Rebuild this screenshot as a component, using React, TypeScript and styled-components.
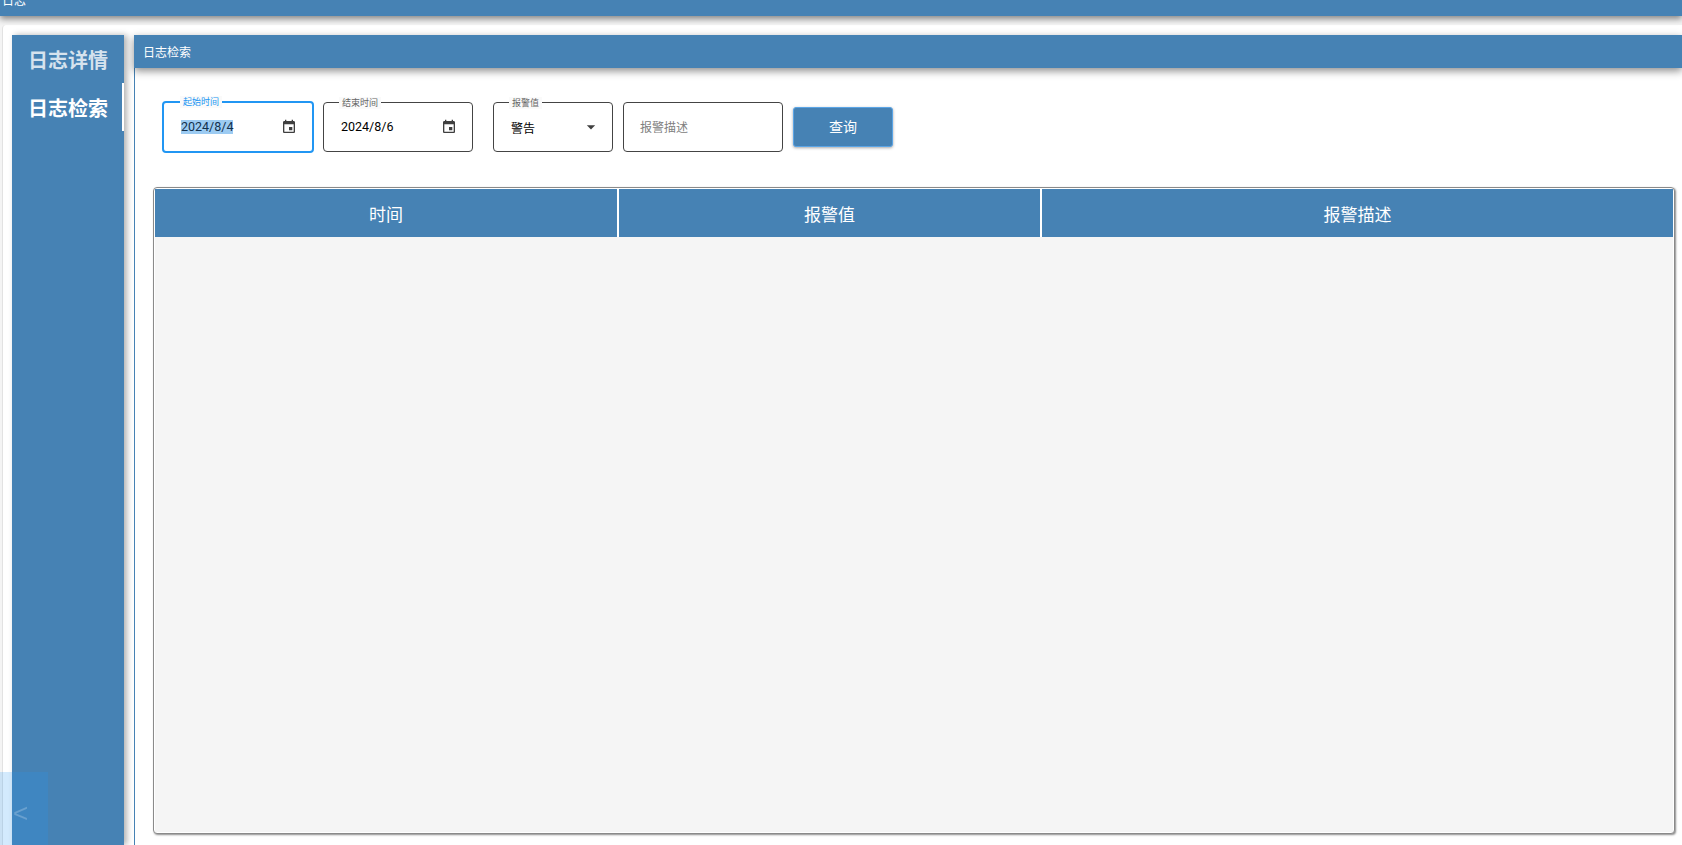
import React from "react";
import styled, { createGlobalStyle } from "styled-components";

const STEEL = "#4682b4";

const GlobalStyle = createGlobalStyle`
  * {
    box-sizing: border-box;
  }
  html,
  body {
    margin: 0;
    height: 845px;
    overflow: hidden;
    background: #fff;
    font-family: "Noto Sans CJK SC", Roboto, sans-serif;
  }
`;

const Page = styled.div`
  display: flex;
  flex-direction: column;
  height: 845px;
  overflow: hidden;
  background: #f4f4f4;
`;

const TopBar = styled.header`
  height: 16px;
  flex: none;
  background: ${STEEL};
  color: #fff;
  font-size: 12px;
  line-height: 16px;
  padding-left: 2px;
  overflow: hidden;
  box-shadow: 0 3px 6px rgba(0, 0, 0, 0.45);
  position: relative;
  z-index: 3;
`;

const TopTitle = styled.div`
  margin-top: -8px;
`;

const Card = styled.div`
  flex: 1;
  min-height: 0;
  display: flex;
  gap: 10px;
  margin: 9px 0 0 2px;
  padding: 10px 0 0 10px;
  background: #fff;
  border-left: 1px solid #e2e2e2;
  border-top-left-radius: 4px;
`;

const Sidebar = styled.nav`
  width: 112px;
  margin-left: -1px;
  flex: none;
  background: ${STEEL};
  box-shadow: 3px 0 6px rgba(0, 0, 0, 0.3);
`;

const NavItem = styled.div<{ $active?: boolean }>`
  height: 48px;
  display: flex;
  align-items: center;
  justify-content: center;
  padding-left: 2px;
  font-size: 20px;
  font-weight: 700;
  color: ${(p) => (p.$active ? "#fff" : "rgba(255, 255, 255, 0.78)")};
  border-right: 2px solid ${(p) => (p.$active ? "#fff" : "transparent")};
`;

const Main = styled.main`
  flex: 1;
  min-width: 0;
  display: flex;
  flex-direction: column;
  border-left: 1px solid ${STEEL};
`;

const MainHeader = styled.div`
  height: 33px;
  flex: none;
  margin-left: -1px;
  padding-left: 9px;
  background: ${STEEL};
  color: #fff;
  font-size: 12px;
  line-height: 33px;
  box-shadow: 0 3px 8px rgba(0, 0, 0, 0.45);
`;

const FilterRow = styled.div`
  display: flex;
  align-items: center;
  flex: none;
  height: 50px;
  margin: 34px 0 0 27px;
`;

const Field = styled.div<{ $width: number; $focused?: boolean; $gap?: number }>`
  position: relative;
  width: ${(p) => p.$width}px;
  height: ${(p) => (p.$focused ? 52 : 50)}px;
  margin-right: ${(p) => p.$gap ?? 10}px;
  padding: 0 15px 0 17px;
  display: flex;
  align-items: center;
  justify-content: space-between;
  border-radius: 4px;
  border: ${(p) => (p.$focused ? "2px solid #2196f3" : "1px solid #444")};
  font-family: Roboto, "Noto Sans CJK SC", sans-serif;
  font-size: 12.5px;
  color: #000;
`;

const FieldLabel = styled.span<{ $focused?: boolean }>`
  position: absolute;
  top: ${(p) => (p.$focused ? -7 : -6)}px;
  left: ${(p) => (p.$focused ? 16 : 15)}px;
  padding: 0 3px;
  background: #fafafa;
  font-family: "Noto Sans CJK SC", sans-serif;
  font-size: 9px;
  line-height: 12px;
  color: ${(p) => (p.$focused ? "#2196f3" : "#666")};
`;

const Value = styled.span<{ $selected?: boolean }>`
  font-family: Roboto, "Noto Sans CJK SC", sans-serif;
  line-height: 14px;
  background: ${(p) => (p.$selected ? "#9ccbf2" : "transparent")};
  color: ${(p) => (p.$selected ? "#12304d" : "#000")};
`;

const CjkValue = styled.span`
  font-family: "Noto Sans CJK SC", sans-serif;
  font-size: 12px;
`;

const Placeholder = styled.span`
  margin: -2px 0 0 -1px;
  font-family: "Noto Sans CJK SC", sans-serif;
  font-size: 12px;
  color: #808080;
`;

const FieldIcon = styled.svg`
  width: 16px;
  height: 16px;
  flex: none;
  fill: #3f3f3f;
`;

const CaretGlyph = styled(FieldIcon)`
  width: 20px;
  height: 20px;
  margin-right: -4px;
`;

const QueryButton = styled.button`
  width: 100px;
  height: 40px;
  padding: 0 0 2px;
  border: 1px solid #5ba5e6;
  border-radius: 3px;
  background: ${STEEL};
  color: #fff;
  font-family: "Noto Sans CJK SC", sans-serif;
  font-size: 14px;
  box-shadow: 0 1px 3px rgba(0, 0, 0, 0.35);
`;

const TablePanel = styled.section`
  flex: 1;
  min-height: 0;
  display: flex;
  flex-direction: column;
  margin: 35px 7px 11px 18px;
  padding: 1px;
  background: #fff;
  border-radius: 4px;
  border: 1px solid #8a8a8a;
  box-shadow: 1px 1px 2px rgba(0, 0, 0, 0.45);
`;

const TableHead = styled.div`
  height: 48px;
  flex: none;
  display: grid;
  grid-template-columns: 462px 421px 1fr;
  column-gap: 2px;
  background: #fff;
`;

const HeadCell = styled.div`
  display: flex;
  align-items: center;
  justify-content: center;
  background: ${STEEL};
  color: #fff;
  font-size: 17px;
`;

const TableBody = styled.div`
  flex: 1;
  background: #f5f5f5;
`;

const CollapseTab = styled.div`
  position: fixed;
  left: 0;
  bottom: 0;
  width: 48px;
  height: 73px;
  display: flex;
  align-items: center;
  padding: 10px 0 0 13px;
  background: rgba(33, 150, 243, 0.2);
  color: rgba(255, 255, 255, 0.22);
  font-family: "Liberation Sans", sans-serif;
  font-size: 26px;
`;

const CalendarIcon = () => (
  <FieldIcon viewBox="0 0 24 24">
    <path d="M17 12h-5v5h5v-5zM16 1v2H8V1H6v2H5c-1.11 0-1.99.9-1.99 2L3 19c0 1.1.89 2 2 2h14c1.1 0 2-.9 2-2V5c0-1.1-.9-2-2-2h-1V1h-2zm3 18H5V8h14v11z" />
  </FieldIcon>
);

const CaretIcon = () => (
  <CaretGlyph viewBox="0 0 24 24">
    <path d="M7 10l5 5 5-5z" />
  </CaretGlyph>
);

export default function App() {
  return (
    <Page>
      <GlobalStyle />
      <TopBar>
        <TopTitle>日志</TopTitle>
      </TopBar>
      <Card>
        <Sidebar>
          <NavItem>日志详情</NavItem>
          <NavItem $active>日志检索</NavItem>
        </Sidebar>
        <Main>
          <MainHeader>日志检索</MainHeader>
          <FilterRow>
            <Field $width={152} $gap={9} $focused>
              <FieldLabel $focused>起始时间</FieldLabel>
              <Value $selected>2024/8/4</Value>
              <CalendarIcon />
            </Field>
            <Field $width={150} $gap={20}>
              <FieldLabel>结束时间</FieldLabel>
              <Value>2024/8/6</Value>
              <CalendarIcon />
            </Field>
            <Field $width={120}>
              <FieldLabel>报警值</FieldLabel>
              <CjkValue>警告</CjkValue>
              <CaretIcon />
            </Field>
            <Field $width={160}>
              <Placeholder>报警描述</Placeholder>
            </Field>
            <QueryButton>查询</QueryButton>
          </FilterRow>
          <TablePanel>
            <TableHead>
              <HeadCell>时间</HeadCell>
              <HeadCell>报警值</HeadCell>
              <HeadCell>报警描述</HeadCell>
            </TableHead>
            <TableBody />
          </TablePanel>
        </Main>
      </Card>
      <CollapseTab>&lt;</CollapseTab>
    </Page>
  );
}
